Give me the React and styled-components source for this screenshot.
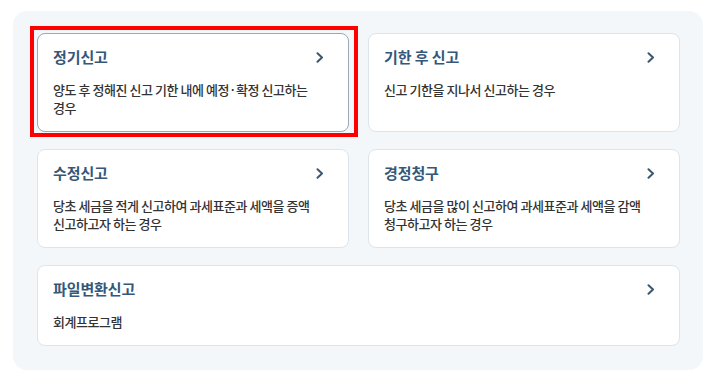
import React from "react";
import styled, { createGlobalStyle } from "styled-components";

const Global = createGlobalStyle`
  html, body { margin: 0; padding: 0; background: #ffffff; }
  body { font-family: "Noto Sans CJK KR", "Noto Sans", sans-serif; }
`;

const Page = styled.div`
  padding: 11px 0 0 13px;
`;

const Panel = styled.div`
  width: 690px;
  box-sizing: border-box;
  padding: 22px 23px 24px 24px;
  background: #f4f7f9;
  border-radius: 14px;
  display: grid;
  grid-template-columns: 1fr 1fr;
  column-gap: 19px;
  row-gap: 17px;
`;

const Card = styled.div`
  position: relative;
  box-sizing: border-box;
  grid-column: ${(p) => (p.$wide ? "1 / span 2" : "auto")};
  background: #ffffff;
  border: 1px solid ${(p) => (p.$selected ? "#9ba8b5" : "#dde5ec")};
  border-radius: 8px;
  padding: 13px 24px 14px 15px;
  cursor: pointer;
`;

const Highlight = styled.div`
  position: absolute;
  top: -8px;
  left: -8px;
  right: -10px;
  bottom: -6px;
  border: 4px solid #ff0000;
  pointer-events: none;
`;

const TitleRow = styled.div`
  display: flex;
  align-items: center;
  justify-content: space-between;
  height: 20px;
`;

const Title = styled.div`
  font-size: 15px;
  font-weight: 700;
  line-height: 20px;
  letter-spacing: -0.1px;
  color: #35587a;
`;

const Desc = styled.div`
  margin-top: 14px;
  font-size: 13px;
  line-height: 18px;
  letter-spacing: -0.45px;
  color: #333333;
  font-weight: 500;
  word-break: keep-all;
`;

const Chevron = () => (
  <svg width="8" height="11" viewBox="0 0 8 11" aria-hidden="true">
    <polyline
      points="1.5,1.3 6,5.5 1.5,9.7"
      fill="none"
      stroke="#3b566e"
      strokeWidth="2"
      strokeLinecap="round"
      strokeLinejoin="round"
    />
  </svg>
);

const items = [
  { title: "정기신고", desc: "양도 후 정해진 신고 기한 내에 예정·확정 신고하는 경우", selected: true },
  { title: "기한 후 신고", desc: "신고 기한을 지나서 신고하는 경우" },
  { title: "수정신고", desc: "당초 세금을 적게 신고하여 과세표준과 세액을 증액 신고하고자 하는 경우" },
  { title: "경정청구", desc: "당초 세금을 많이 신고하여 과세표준과 세액을 감액 청구하고자 하는 경우" },
  { title: "파일변환신고", desc: "회계프로그램", wide: true },
];

export default function App() {
  return (
    <>
      <Global />
      <Page>
        <Panel>
          {items.map((it) => (
            <Card key={it.title} $wide={it.wide} $selected={it.selected}>
              {it.selected && <Highlight />}
              <TitleRow>
                <Title>{it.title}</Title>
                <Chevron />
              </TitleRow>
              <Desc>{it.desc}</Desc>
            </Card>
          ))}
        </Panel>
      </Page>
    </>
  );
}
